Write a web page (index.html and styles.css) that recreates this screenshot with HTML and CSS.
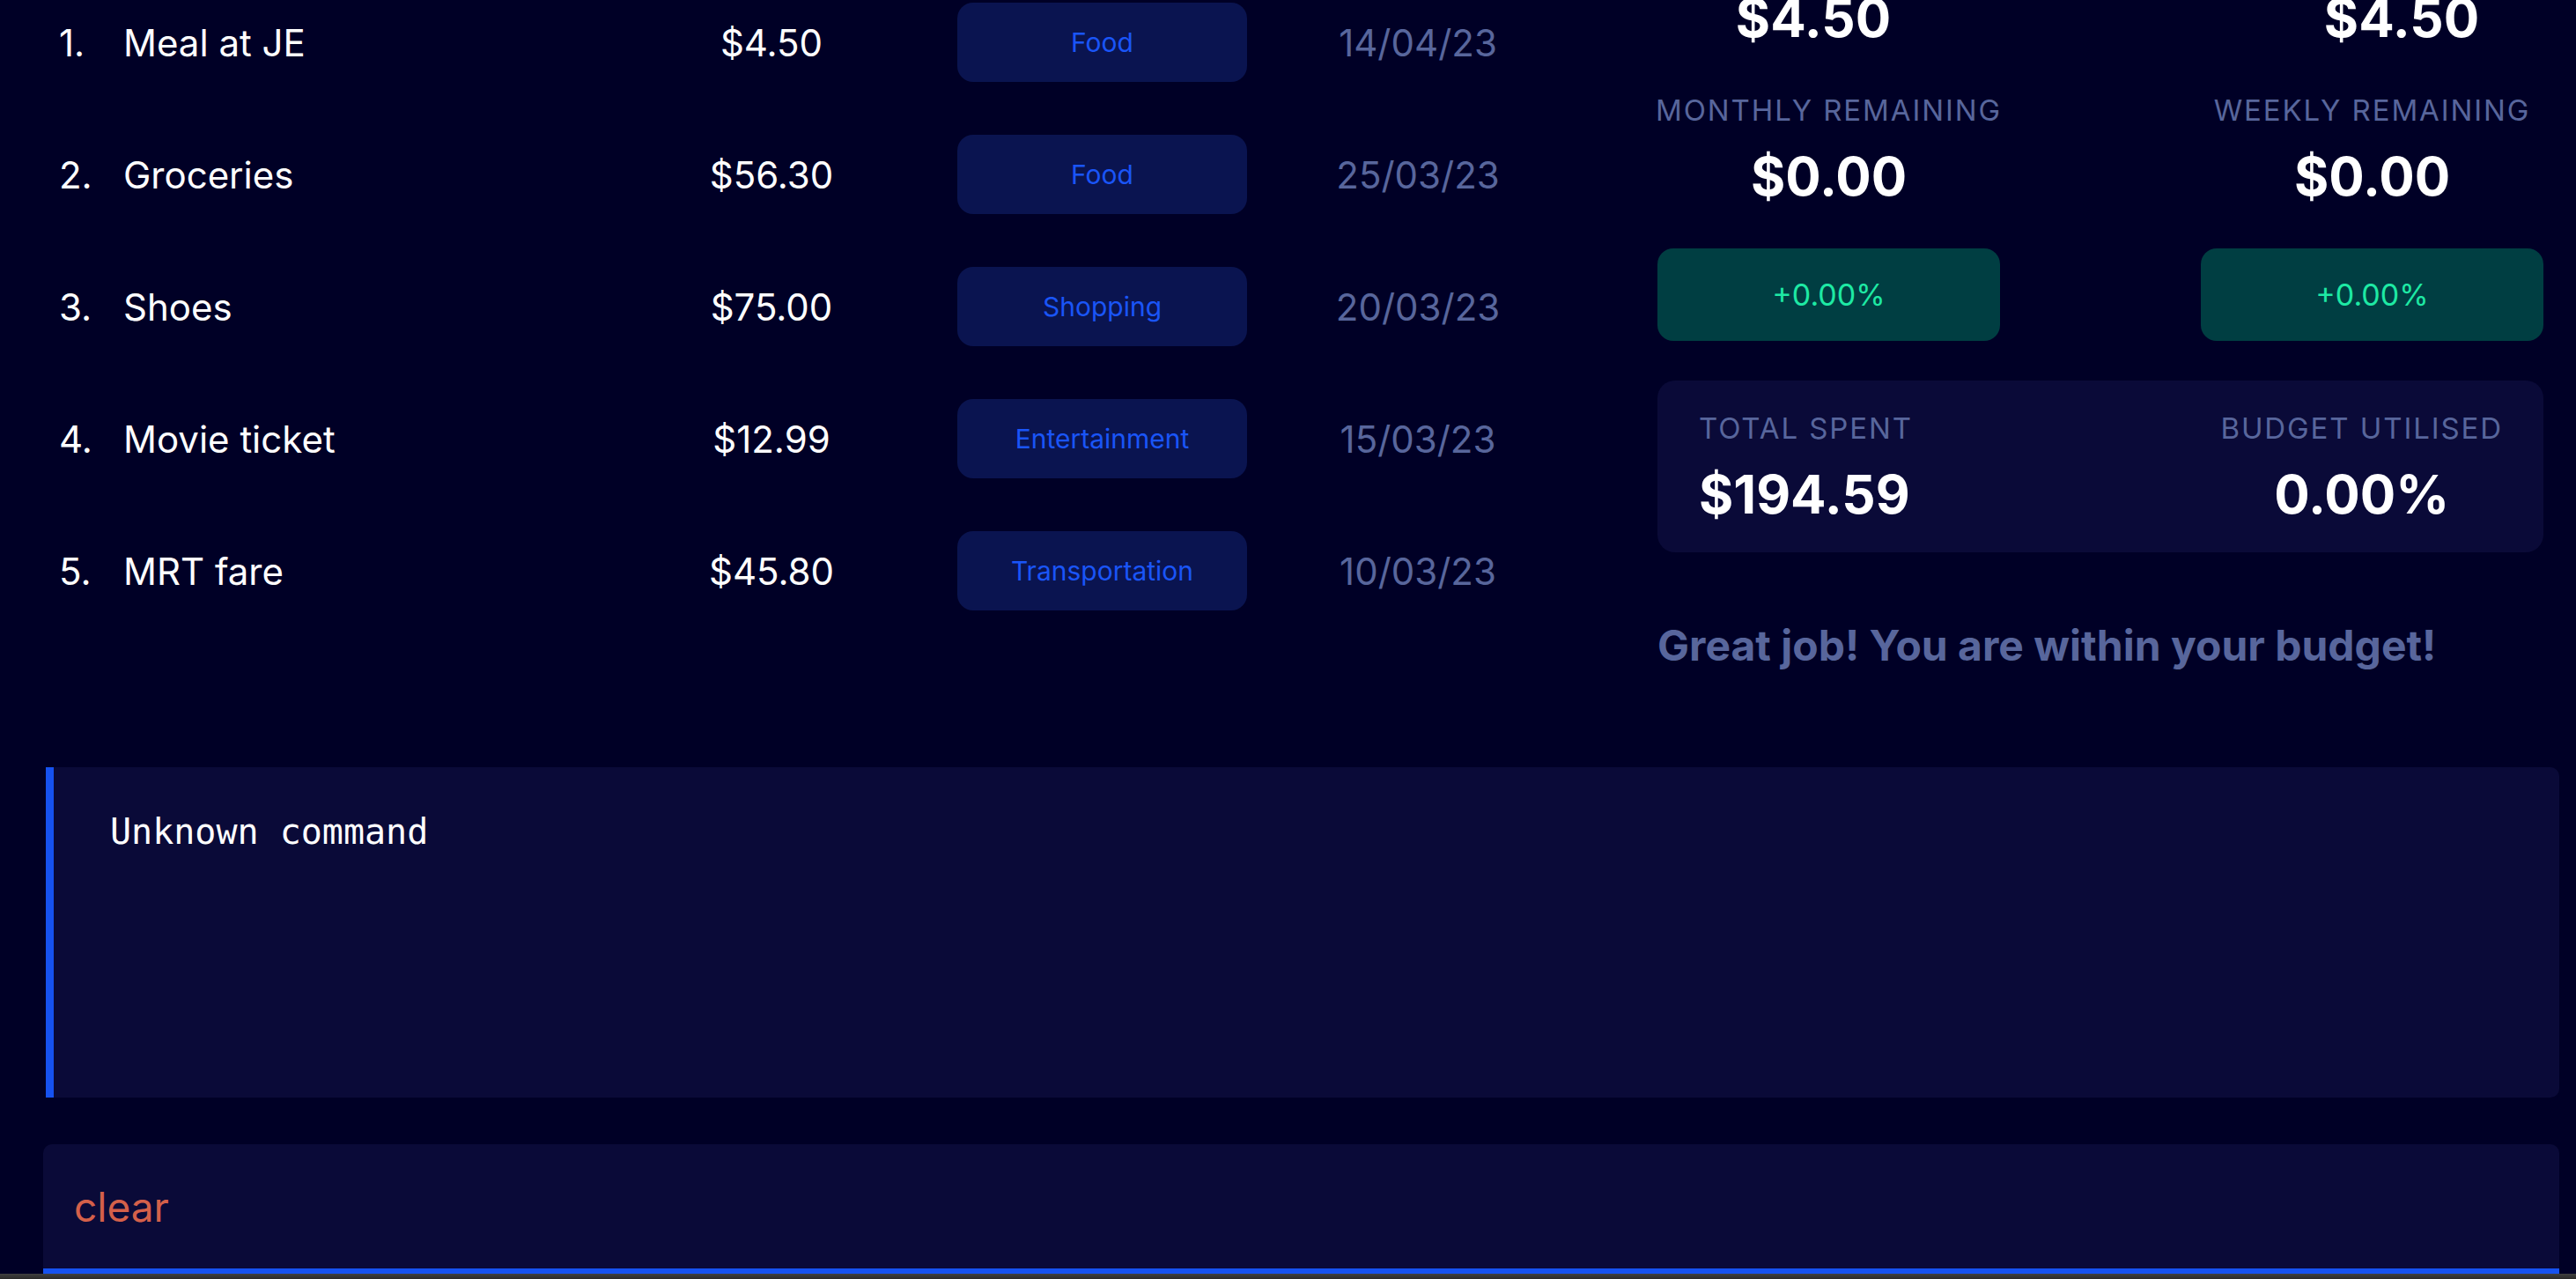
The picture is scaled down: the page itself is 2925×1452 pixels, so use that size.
FILE: index.html
```html
<!DOCTYPE html>
<html lang="en">
<head>
<meta charset="utf-8">
<title>Expense Tracker</title>
<link rel="stylesheet" href="styles.css">
</head>
<body>
<div class="app">
  <div class="top">
    <div class="list">
      <div class="row">
        <span class="idx">1.</span><span class="name">Meal at JE</span><span class="amount">$4.50</span>
        <span class="badge">Food</span><span class="date">14/04/23</span>
      </div>
      <div class="row">
        <span class="idx">2.</span><span class="name">Groceries</span><span class="amount">$56.30</span>
        <span class="badge">Food</span><span class="date">25/03/23</span>
      </div>
      <div class="row">
        <span class="idx">3.</span><span class="name">Shoes</span><span class="amount">$75.00</span>
        <span class="badge">Shopping</span><span class="date">20/03/23</span>
      </div>
      <div class="row">
        <span class="idx">4.</span><span class="name">Movie ticket</span><span class="amount">$12.99</span>
        <span class="badge">Entertainment</span><span class="date">15/03/23</span>
      </div>
      <div class="row">
        <span class="idx">5.</span><span class="name">MRT fare</span><span class="amount">$45.80</span>
        <span class="badge">Transportation</span><span class="date">10/03/23</span>
      </div>
    </div>
    <div class="stats">
      <div class="pair pair-spent">
        <div class="metric metric-a">
          <div class="label">MONTHLY SPENT</div>
          <div class="value">$4.50</div>
        </div>
        <div class="metric metric-b">
          <div class="label">WEEKLY SPENT</div>
          <div class="value">$4.50</div>
        </div>
      </div>
      <div class="pair pair-remaining">
        <div class="metric">
          <div class="label">MONTHLY REMAINING</div>
          <div class="value">$0.00</div>
          <div class="change">+0.00%</div>
        </div>
        <div class="metric">
          <div class="label">WEEKLY REMAINING</div>
          <div class="value">$0.00</div>
          <div class="change">+0.00%</div>
        </div>
      </div>
      <div class="summary">
        <div class="sum-col">
          <div class="label">TOTAL SPENT</div>
          <div class="value">$194.59</div>
        </div>
        <div class="sum-col sum-right">
          <div class="label">BUDGET UTILISED</div>
          <div class="value">0.00%</div>
        </div>
      </div>
      <div class="message">Great job! You are within your budget!</div>
    </div>
  </div>
  <div class="result">Unknown command</div>
  <div class="command">clear</div>
  <div class="strip"></div>
</div>
</body>
</html>
```

FILE: styles.css
```css
html, body {
  margin: 0;
  padding: 0;
  background: #000026;
}

.app {
  height: 1452px;
  display: flex;
  flex-direction: column;
  overflow: hidden;
  font-family: Inter, "Noto Sans", sans-serif;
  color: #ffffff;
}

.top {
  flex: 1;
  margin-top: -75px;
  display: flex;
  min-height: 0;
}

/* ---------- expense list ---------- */
.list {
  width: 1882px;
  padding-top: 48px;
  box-sizing: border-box;
}

.row {
  height: 150px;
  display: flex;
  align-items: center;
  padding-left: 67px;
  font-size: 42px;
}

.idx {
  width: 73px;
}

.name {
  width: 636px;
}

.amount {
  width: 200px;
  text-align: center;
}

.badge {
  width: 329px;
  height: 90px;
  margin-left: 111px;
  border-radius: 18px;
  background: #0a1450;
  color: #1a55f7;
  font-size: 30px;
  display: flex;
  align-items: center;
  justify-content: center;
}

.date {
  width: 200px;
  margin-left: 94px;
  text-align: center;
  color: #58669c;
}

/* ---------- stats ---------- */
.stats {
  width: 1006px;
  display: flex;
  flex-direction: column;
}

.pair {
  display: flex;
  justify-content: space-between;
}

.pair-remaining {
  margin-top: 50px;
}

.metric {
  width: 389px;
  display: flex;
  flex-direction: column;
  align-items: center;
}

.metric-a {
  width: 354px;
}

.metric-b {
  width: 322px;
}

.label {
  font-size: 33px;
  line-height: 40px;
  letter-spacing: 1.9px;
  color: #58669c;
  white-space: nowrap;
}

.value {
  margin-top: 20px;
  font-size: 60px;
  line-height: 70px;
  font-weight: 700;
  color: #ffffff;
}

.change {
  margin-top: 47px;
  width: 389px;
  height: 105px;
  border-radius: 18px;
  background: #003e42;
  color: #1ee9a4;
  font-size: 34px;
  display: flex;
  align-items: center;
  justify-content: center;
}

.summary {
  margin-top: 45px;
  height: 195px;
  box-sizing: border-box;
  padding: 34px 46px 31px 47px;
  border-radius: 20px;
  background: #0a0a38;
  display: flex;
  justify-content: space-between;
}

.sum-col {
  display: flex;
  flex-direction: column;
}

.sum-right {
  align-items: center;
}

.message {
  margin-top: 77px;
  font-size: 48px;
  line-height: 58px;
  font-weight: 700;
  color: #58669c;
  white-space: nowrap;
}

/* ---------- result display ---------- */
.result {
  height: 375px;
  flex: none;
  margin: 0 19px 53px 52px;
  box-sizing: border-box;
  padding: 49px 0 0 64px;
  background: #0a0a38;
  border-left: 9px solid #1652f0;
  border-radius: 0 10px 10px 0;
  font-family: "DejaVu Sans Mono", "Liberation Mono", monospace;
  font-size: 40px;
  line-height: 48px;
  color: #ffffff;
  white-space: pre;
}

/* ---------- command box ---------- */
.command {
  height: 147px;
  flex: none;
  margin: 0 19px 0 49px;
  box-sizing: border-box;
  padding: 43px 0 0 35px;
  background: #0a0a38;
  border-bottom: 6px solid #1652f0;
  border-radius: 10px 10px 0 0;
  font-size: 46px;
  line-height: 56px;
  color: #d4604a;
}

.strip {
  height: 6px;
  flex: none;
  background: linear-gradient(#404040, #2a2a2a);
}
```
